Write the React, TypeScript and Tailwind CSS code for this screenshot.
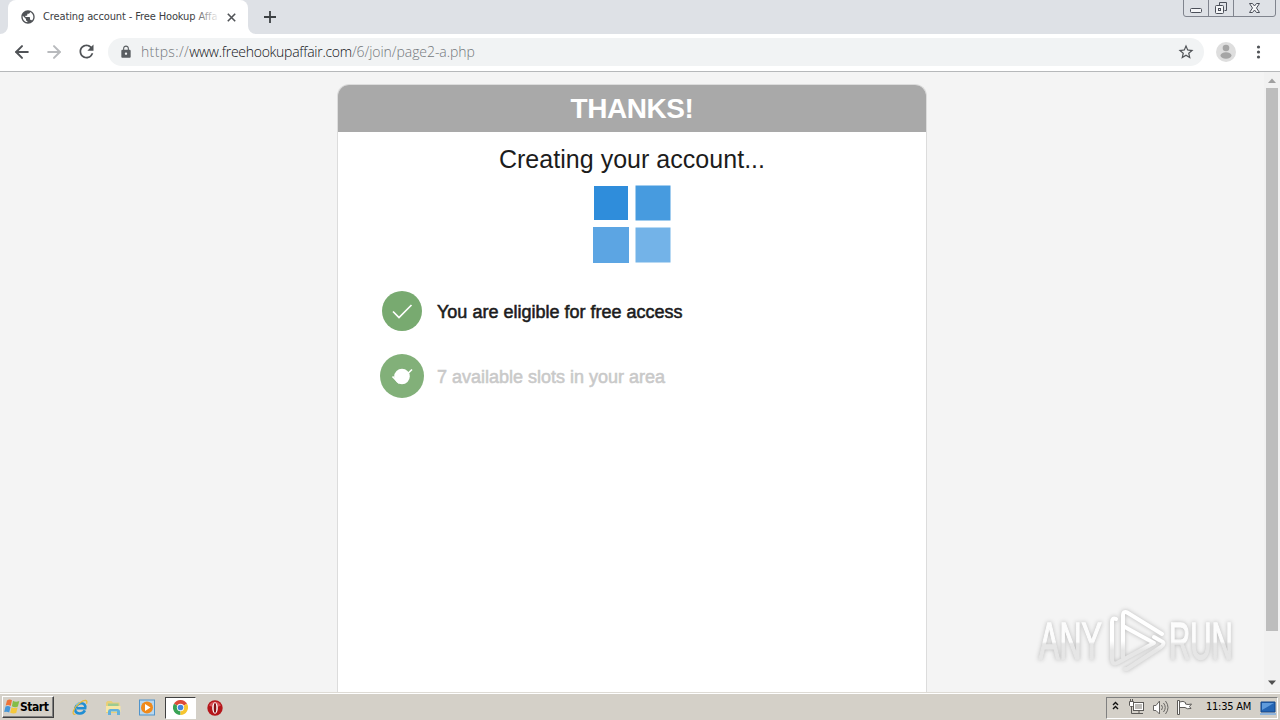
import type { ReactNode } from "react";
import { ArrowLeft, ArrowRight } from "lucide-react";
import { MdLock, MdStarBorder, MdRefresh, MdPublic } from "react-icons/md";

const Tab = () => {
  return (
    <div className="relative h-[34px] w-60 bg-white rounded-t-lg flex items-center pl-3">
      <svg className="absolute -left-2 bottom-0" width="8" height="8"><path d="M8 0v8H0a8 8 0 0 0 8-8" fill="#fff" /></svg>
      <svg className="absolute -right-2 bottom-0" width="8" height="8"><path d="M0 0v8h8a8 8 0 0 1-8-8" fill="#fff" /></svg>
      <MdPublic className="size-4 shrink-0 text-[#505357]" />
      <div className="relative ml-[7px] mt-px w-[177px] overflow-hidden whitespace-nowrap text-[11px] tracking-[-0.120px] text-[#3c4043] font-['DejaVu_Sans_Condensed','DejaVu_Sans',sans-serif] font-stretch-condensed">
        Creating account - Free Hookup Affa
        <div className="absolute inset-y-0 right-0 w-7 bg-gradient-to-r from-white/0 to-white" />
      </div>
      <svg className="ml-[7px]" width="9" height="9" viewBox="0 0 9 9"><path d="m.8.8 7.4 7.4m0-7.4L.8 8.2" stroke="#505357" strokeWidth="1.6" /></svg>
    </div>
  );
}

const WindowButtons = () => {
  return (
    <svg className="ml-auto mr-[3px] self-start" width="94" height="18" viewBox="0 0 94 18" fill="none">
      <path d="M.5 0v14q0 2.5 2.5 2.5h87q2.500 0 2.500-2.500V0M25.500 0v16M50.500 0v16" stroke="#80848e" />
      <rect x="7.500" y="8.500" width="11" height="4" rx="1" fill="#f4f5f7" stroke="#4b4f59" />
      <path d="M36.500 5V2.500h7v8h-2" stroke="#4b4f59" />
      <rect x="32.500" y="5.500" width="8" height="8" rx="1" fill="#f4f5f7" stroke="#4b4f59" />
      <rect x="35.500" y="8.500" width="2" height="2" stroke="#4b4f59" />
      <path d="M66.500 3.500h3l2 2.500 2-2.500h3L73.500 8l3 4.500h-3l-2-2.500-2 2.500h-3L69.500 8z" fill="#f4f5f7" stroke="#4b4f59" />
    </svg>
  );
}

const Toolbar = () => {
  return (
    <div className="h-[38px] shrink-0 bg-white border-b border-[#b6b8ba] flex items-center pl-3 pr-3">
      <ArrowLeft className="size-5 -mt-0.5 text-[#505357] [&_path]:[stroke-width:2.4]" />
      <ArrowRight className="ml-3 size-5 -mt-0.5 text-[#b8babd] [&_path]:[stroke-width:2.4]" />
      <MdRefresh className="ml-[12px] -mt-0.5 size-[21px] text-[#505357]" />
      <div className="ml-[11px] h-7 w-[1096px] rounded-full bg-[#f1f3f4] flex items-center pl-[11px] pr-[9px] -mt-px">
        <MdLock className="size-3.5 text-[#5a5e62]" />
        <p className="ml-2 -mt-0.5 flex whitespace-nowrap text-[14px] text-[#74787c] font-['Open_Sans',sans-serif] font-light">
          <span className="tracking-[0.350px]">https://</span>
          <span className="tracking-[-0.270px] text-[#111418]">www.freehookupaffair.com</span>
          <span className="tracking-[-0.060px]">/6/join/page2-a.php</span>
        </p>
        <MdStarBorder className="ml-auto size-[18px] text-[#505357]" />
      </div>
      <svg className="ml-[12px] -mt-0.5 shrink-0" width="20" height="20" viewBox="0 0 20 20">
        <circle cx="10" cy="10" r="10" fill="#dedede" />
        <circle cx="10" cy="6" r="3.300" fill="#a5a5a5" />
        <ellipse cx="10" cy="13.500" rx="5.500" ry="3.300" fill="#a5a5a5" />
      </svg>
      <svg className="ml-[20px] -mt-0.5 shrink-0" width="5" height="14" viewBox="0 0 5 14" fill="#505357">
        <circle cx="2.500" cy="2" r="1.600" /><circle cx="2.500" cy="7" r="1.600" /><circle cx="2.500" cy="12" r="1.600" />
      </svg>
    </div>
  );
}

const Step = ({ icon, label, className }: { icon: ReactNode, label: string, className: string }) => {
  return (
    <li className="flex items-center h-11">
      <div className="w-11 flex justify-center">{icon}</div>
      <p className={`ml-[13px] mt-0.5 whitespace-nowrap text-[18px] [-webkit-text-stroke:0.55px_currentColor] ${className}`}>{label}</p>
    </li>
  );
}

const Loader = () => {
  return (
    <svg className="mx-auto mt-[9px]" width="80" height="80" viewBox="0 0 80 80">
      <rect x="2" y="2" width="34" height="34" fill="#2f8ddb" />
      <rect x="43.500" y="1.500" width="35" height="35" fill="#479bdf" />
      <rect x="1" y="43" width="36" height="36" fill="#5ca5e3" />
      <rect x="43.500" y="43.500" width="35" height="35" fill="#73b3e8" />
    </svg>
  );
}

const Card = () => {
  return (
    <main className="mx-auto mt-3 w-[590px] rounded-t-xl border border-b-0 border-[#dcdcdc] bg-white overflow-hidden font-['Liberation_Sans',Arial,sans-serif]">
      <h1 className="h-[47px] bg-[#a9a9a9] text-center text-[28px] leading-[47px] tracking-[-0.450px] font-bold text-white">THANKS!</h1>
      <h2 className="mt-[11px] text-center text-[25px] leading-8 text-[#1c1c1c] tracking-[0.030px]">Creating your account...</h2>
      <Loader />
      <ul className="mt-[25px] pl-[42px] flex flex-col gap-[21px]">
        <Step
          label="You are eligible for free access"
          className="text-[#1c1c1c]"
          icon={
            <svg width="40" height="40" viewBox="0 0 40 40">
              <circle cx="20" cy="20" r="20" fill="#78aa70" />
              <path d="m11 20.500 6 6L29.500 14" fill="none" stroke="#fff" strokeWidth="1.700" />
            </svg>
          }
        />
        <Step
          label="7 available slots in your area"
          className="text-[#c9c9c9]"
          icon={
            <svg width="44" height="44" viewBox="0 0 44 44">
              <circle cx="22" cy="22" r="22" fill="#82b079" />
              <circle cx="22" cy="22.500" r="7.800" fill="#fff" />
              <path d="m12.500 22.500 6 6L32 15.500" fill="none" stroke="#fff" strokeWidth="1.700" />
            </svg>
          }
        />
      </ul>
    </main>
  );
}

const Scrollbar = () => {
  return (
    <div className="w-4 bg-[#f1f1f1] flex flex-col items-center">
      <svg width="16" height="16"><path d="m4 11 4-4.500 4 4.500z" fill="#a0a0a0" /></svg>
      <div className="h-[543px] w-3 bg-[#bdbdbd]" />
      <svg className="mt-auto mb-px" width="16" height="16"><path d="m4 5.500 4 4.500 4-4.500z" fill="#505050" /></svg>
    </div>
  );
}

const Watermark = () => {
  return (
    <svg className="absolute left-[1034px] top-[604px] drop-shadow-[0_0_2px_#b8b8b8]" width="204" height="74" viewBox="0 0 204 74" fill="none">
      <defs>
        <linearGradient id="letters" gradientUnits="userSpaceOnUse" x1="0" y1="-38" x2="0" y2="0">
          <stop offset="0.550" stopColor="#fcfcfc" />
          <stop offset="0.600" stopColor="#e6e6e6" />
        </linearGradient>
        <linearGradient id="play" gradientUnits="userSpaceOnUse" x1="0" y1="6" x2="0" y2="68">
          <stop offset="0.500" stopColor="#fff" />
          <stop offset="0.650" stopColor="#e6e6e6" />
        </linearGradient>
      </defs>
      <g fill="url(#letters)" stroke="url(#letters)" strokeWidth="1.400" fontSize="52" fontFamily="'Liberation Sans',sans-serif">
        <text transform="translate(5 55) scale(.61 1)" textLength="103" lengthAdjust="spacingAndGlyphs">ANY</text>
        <text transform="translate(135 55) scale(.59 1)" textLength="108" lengthAdjust="spacingAndGlyphs">RUN</text>
      </g>
      <g stroke="url(#play)" strokeWidth="4" strokeLinejoin="round" strokeLinecap="round">
        <path d="M82 15q-4-2-4 3v37q0 6 5 4l37-20-31-17" />
        <path d="M89 54V12q0-6 5-3l34 21" />
        <path d="M91 65h2l34-22q5-4 0-6l-7-4" />
      </g>
    </svg>
  );
}

const StartFlag = () => {
  return (
    <svg className="-mt-px" width="16" height="17" viewBox="0 0 16 17">
      <path d="M3 2.500Q5.500.5 8 2.300L6.700 8q-2.500-1.600-5-.4z" fill="#ee7337" />
      <path d="M9 2.800q2.500 1.500 6.300.3l-1.400 5.500q-3 1.200-6-.3z" fill="#84bd47" />
      <path d="M1.500 8.600q2.500-1.300 5 .3L5.200 14.500q-2.300-1.500-5-.4z" fill="#4596d8" />
      <path d="M7.600 9.200q2.900 1.500 6 .4l-1.400 5.500q-3 1-6-.4z" fill="#f5c83c" />
    </svg>
  );
}

const IeIcon = () => {
  return (
    <svg width="17" height="17" viewBox="0 0 17 17" fill="none">
      <path d="M12.900 11.300C11 15 5 15.800 3.500 12 2.300 8.500 5 4.700 8.700 4.300c3.500-.3 5.200 2 4.500 4.900H5" stroke="#208ed3" strokeWidth="2.600" />
      <path d="M4 6.500Q5.500 4 8.500 3.500" stroke="#7fd0f2" strokeWidth="1.200" />
      <path d="M3.500 15.300C-1.500 16 2 8 8 3.800c5-3.500 8-3 6.500 1" stroke="#e6ba3c" strokeWidth="1.300" />
    </svg>
  );
}

const FolderIcon = () => {
  return (
    <svg width="17" height="17" viewBox="0 0 17 17">
      <path d="M1 3.500 2.500 2h4L8 3.500h6.500V14H1z" fill="#e9cf78" />
      <path d="M3 4.500h10.500v3H3z" fill="#9ccb93" />
      <path d="M1 7h14.500v6H1z" fill="#f7e7a5" />
      <path d="M3 16v-3.500q0-2.500 2-2.500h7.500q2.500 0 2.500 2.500V16h-3v-3.500H6V16z" fill="#62b1dc" />
    </svg>
  );
}

const MediaIcon = () => {
  return (
    <svg width="17" height="17" viewBox="0 0 17 17">
      <rect x=".5" y="1" width="15" height="15" fill="#b8d7ef" stroke="#5094cb" />
      <circle cx="8" cy="8.500" r="6" fill="#f08a1b" />
      <path d="m6 5 5.500 3.500L6 12z" fill="#fff" />
    </svg>
  );
}

const ChromeIcon = () => {
  return (
    <svg width="15" height="15" viewBox="0 0 16 16">
      <path d="M8 8 1.070 4A8 8 0 0 1 14.930 4z" fill="#dc4a38" />
      <path d="M8 8V16A8 8 0 0 1 1.070 4z" fill="#39a355" />
      <path d="M8 8 14.930 4A8 8 0 0 1 8 16z" fill="#f6c52f" />
      <circle cx="8" cy="8" r="3.900" fill="#fff" /><circle cx="8" cy="8" r="3" fill="#4386dd" />
    </svg>
  );
}

const OperaIcon = () => {
  return (
    <svg width="16" height="16" viewBox="0 0 16 16">
      <circle cx="8" cy="8" r="7.700" fill="#b5161b" />
      <path d="M2 5.500a6.600 6.600 0 0 1 12 0q-6 3-12 0" fill="#d9545a" />
      <ellipse cx="8" cy="8" rx="2.800" ry="5.700" fill="#fff" />
      <ellipse cx="8" cy="8" rx="1.300" ry="4.900" fill="#841014" />
    </svg>
  );
}

const Tray = () => {
  return (
    <div className="ml-auto mr-0.5 mt-px h-[22px] w-[172px] border border-t-[#808080] border-l-[#808080] border-b-white border-r-white flex items-center pl-[5px]">
      <svg className="-mt-1" width="7" height="10" viewBox="0 0 7 10" fill="none" stroke="#111" strokeWidth="1.400"><path d="m1 4 2.500-2.500L6 4M1 8l2.500-2.500L6 8" /></svg>
      <svg className="ml-[9px] -mt-0.5" width="17" height="17" viewBox="0 0 17 17" fill="none" stroke="#5c5a57">
        <rect x="5.500" y="3.500" width="10" height="8" fill="#bdbbb7" />
        <rect x="6.500" y="4.500" width="8" height="6" stroke="#fff" />
        <path d="M8 14.500h7M11 12v2M3.500 8v6.500H8" />
        <path d="M1.500 2.500h4v4l-1 1h-2l-1-1zM2.500 0v2M4.500 0v2" fill="#fff" />
      </svg>
      <svg className="ml-[7px] -mt-0.5" width="17" height="17" viewBox="0 0 17 17" fill="none" stroke="#676562">
        <path d="M1.500 6.500H4L7.500 2v13L4 11.500H1.500z" fill="#fff" />
        <path d="M9.500 6q2 2.500 0 5M11.500 4q3.500 4.500 0 9M13.500 2q5 6.500 0 13" />
      </svg>
      <svg className="ml-[7px] -mt-0.5" width="17" height="17" viewBox="0 0 17 17" stroke="#5c5a57">
        <path d="M1.500 1.500h2v14h-2zM3.500 3q4-1.500 6 .5v1.500q2 1 6 0l-2 2.500 1.500 2q-4 1-6-1H3.500z" fill="#fff" />
      </svg>
      <p className="ml-[13px] -mt-0.5 w-[47px] whitespace-nowrap text-[11px] tracking-[-0.250px] text-black font-['DejaVu_Sans_Condensed','DejaVu_Sans',sans-serif] font-stretch-condensed">11:35 AM</p>
      <svg className="ml-[7px] shrink-0" width="16" height="14" viewBox="0 0 16 14">
        <path d="M1 1h14v10H1z" fill="#2465b4" stroke="#12468a" />
        <path d="M2 2h12L2 9z" fill="#5f9bdc" />
        <path d="M0 12h16v2H0z" fill="#8fb4dc" />
      </svg>
    </div>
  );
}

const Taskbar = () => {
  return (
    <footer className="h-7 shrink-0 bg-[#d4d0c8] border-t border-[#dedbd5] shadow-[inset_0_1px_0_#ffffff] flex items-start pt-[3px] pl-0.5">
      <button className="h-[22px] w-[52px] border border-t-white border-l-white border-b-[#404040] border-r-[#404040] shadow-[inset_-1px_-1px_0_#808080] flex items-center pl-px">
        <StartFlag />
        <span className="text-[12px] tracking-[-0.450px] font-bold text-black font-['DejaVu_Sans_Condensed','DejaVu_Sans',sans-serif] font-stretch-condensed">Start</span>
      </button>
      <div className="h-[23px] flex items-center">
        <div className="ml-[18px]"><IeIcon /></div>
        <div className="ml-4"><FolderIcon /></div>
        <div className="ml-[17px]"><MediaIcon /></div>
        <div className="ml-[9px] h-[22px] w-[31px] bg-white border border-t-[#404040] border-l-[#404040] border-b-white border-r-white flex items-center justify-center"><ChromeIcon /></div>
        <div className="ml-[11px]"><OperaIcon /></div>
      </div>
      <Tray />
    </footer>
  );
}

const App = () => {
  return (
    <div className="relative h-[720px] w-[1280px] overflow-hidden flex flex-col bg-[#f4f4f4]">
      <header className="h-[34px] shrink-0 bg-[#dee1e6] flex items-center pl-2">
        <Tab />
        <svg className="ml-4" width="12" height="12"><path d="M6 0v12M0 6h12" stroke="#3c4043" strokeWidth="1.800" /></svg>
        <WindowButtons />
      </header>
      <Toolbar />
      <div className="min-h-0 grow flex">
        <div className="w-[1264px] flex">
          <Card />
        </div>
        <Scrollbar />
      </div>
      <Taskbar />
      <Watermark />
    </div>
  );
}

export default App;
